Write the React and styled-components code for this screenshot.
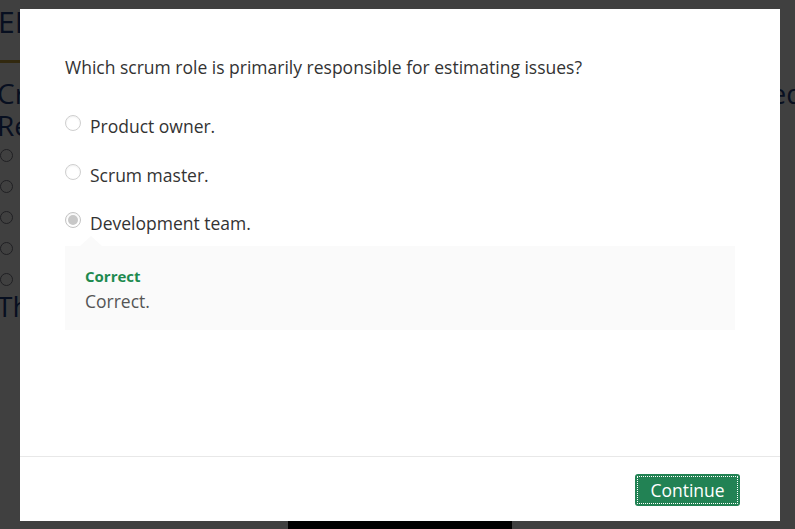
import React from 'react';
import styled, { createGlobalStyle } from 'styled-components';

const GlobalStyle = createGlobalStyle`
  html, body {
    margin: 0;
    padding: 0;
    background: #ffffff;
    font-family: "Open Sans", "Liberation Sans", sans-serif;
    overflow: hidden;
  }
  * { box-sizing: border-box; }
`;

const Page = styled.div`
  width: 795px;
  height: 529px;
  overflow: hidden;
  color: #1f3c80;
`;

const PageTitle = styled.div`
  font-size: 30px;
  line-height: 36px;
  padding-top: 4px;
  margin-left: -2px;
`;

const GoldRule = styled.div`
  width: 60px;
  height: 3px;
  background: #c8a23c;
  margin-top: 20px;
`;

const Heading = styled.div`
  font-size: 28px;
  line-height: 32px;
  margin-top: ${p => (p.$first ? '14px' : '0')};
  margin-left: -3px;
  white-space: nowrap;
`;

const ChoiceList = styled.div`
  display: flex;
  flex-direction: column;
  gap: 18px;
  margin-top: 8px;
`;

const PageRadio = styled.span`
  display: block;
  width: 13px;
  height: 13px;
  border-radius: 50%;
  border: 1.5px solid #7d7d8a;
`;

const SubHeading = styled.div`
  font-size: 28px;
  line-height: 32px;
  margin-top: 4px;
  margin-left: -3px;
`;

const TeamButton = styled.div`
  margin: 176px 0 0 288px;
  width: 224px;
  height: 40px;
  background: #000;
  color: #bbb;
  font-size: 16px;
  letter-spacing: 2px;
  display: flex;
  justify-content: center;
  line-height: 16px;
`;

const Overlay = styled.div`
  position: fixed;
  inset: 0;
  background: rgba(0, 0, 0, 0.75);
  display: flex;
  align-items: flex-start;
  justify-content: center;
  padding: 9px 0 0 5px;
`;

const Modal = styled.div`
  width: 760px;
  height: 512px;
  background: #ffffff;
  display: flex;
  flex-direction: column;
  color: #333;
`;

const Body = styled.div`
  flex: 1;
  padding: 44px 45px 0;
`;

const Question = styled.div`
  font-size: 17.5px;
  line-height: 28px;
  color: #333;
`;

const Options = styled.div`
  display: flex;
  flex-direction: column;
  gap: 20.5px;
  margin-top: 31px;
`;

const Option = styled.label`
  display: flex;
  align-items: flex-start;
  gap: 9px;
  font-size: 17.5px;
  line-height: 28px;
  color: #333;
`;

const Radio = styled.span`
  flex: none;
  width: 16px;
  height: 16px;
  margin-top: 3px;
  border-radius: 50%;
  border: 1px solid ${p => (p.$checked ? '#c4c4c4' : '#cfcfcf')};
  background: #fff;
  display: flex;
  align-items: center;
  justify-content: center;
  box-shadow: inset 0 1px 2px rgba(0, 0, 0, 0.06);

  &::after {
    content: '';
    display: ${p => (p.$checked ? 'block' : 'none')};
    width: 10px;
    height: 10px;
    border-radius: 50%;
    background: #c8c8c8;
  }
`;

const Feedback = styled.div`
  position: relative;
  margin-top: 9px;
  background: #fafafa;
  padding: 19px 20px 18px;
  height: 84px;

  &::before {
    content: '';
    position: absolute;
    left: 15px;
    top: -10px;
    border-left: 11px solid transparent;
    border-right: 11px solid transparent;
    border-bottom: 10px solid #fafafa;
  }
`;

const FeedbackTitle = styled.div`
  font-size: 15px;
  line-height: 22px;
  font-weight: 700;
  color: #1e8a4f;
`;

const FeedbackText = styled.div`
  font-size: 17.5px;
  line-height: 28px;
  color: #555;
`;

const Footer = styled.div`
  border-top: 1px solid #e8e8e8;
  height: 65px;
  display: flex;
  justify-content: flex-end;
  align-items: flex-start;
  padding: 17px 40px 0;
`;

const ContinueButton = styled.button`
  width: 105px;
  height: 32px;
  border: none;
  border-radius: 3px;
  background: #228254;
  color: #fff;
  font-family: "Open Sans", "Liberation Sans", sans-serif;
  font-size: 17.5px;
  line-height: 24px;
  outline: 1px dotted #ffffff;
  outline-offset: -3px;
  cursor: pointer;
`;

const options = [
  { text: 'Product owner.', checked: false },
  { text: 'Scrum master.', checked: false },
  { text: 'Development team.', checked: true },
];

export default function App() {
  return (
    <>
      <GlobalStyle />
      <Page>
        <PageTitle>ELEARNING</PageTitle>
        <GoldRule />
        <Heading $first>Create your own Scrum team with the roles you have selected</Heading>
        <Heading>Review your team</Heading>
        <ChoiceList>
          {[0, 1, 2, 3, 4].map(i => <PageRadio key={i} />)}
        </ChoiceList>
        <SubHeading>The team</SubHeading>
        <TeamButton>TEAM</TeamButton>
      </Page>
      <Overlay>
        <Modal>
          <Body>
            <Question>Which scrum role is primarily responsible for estimating issues?</Question>
            <Options>
              {options.map(o => (
                <Option key={o.text}>
                  <Radio $checked={o.checked} />
                  {o.text}
                </Option>
              ))}
            </Options>
            <Feedback>
              <FeedbackTitle>Correct</FeedbackTitle>
              <FeedbackText>Correct.</FeedbackText>
            </Feedback>
          </Body>
          <Footer>
            <ContinueButton>Continue</ContinueButton>
          </Footer>
        </Modal>
      </Overlay>
    </>
  );
}
